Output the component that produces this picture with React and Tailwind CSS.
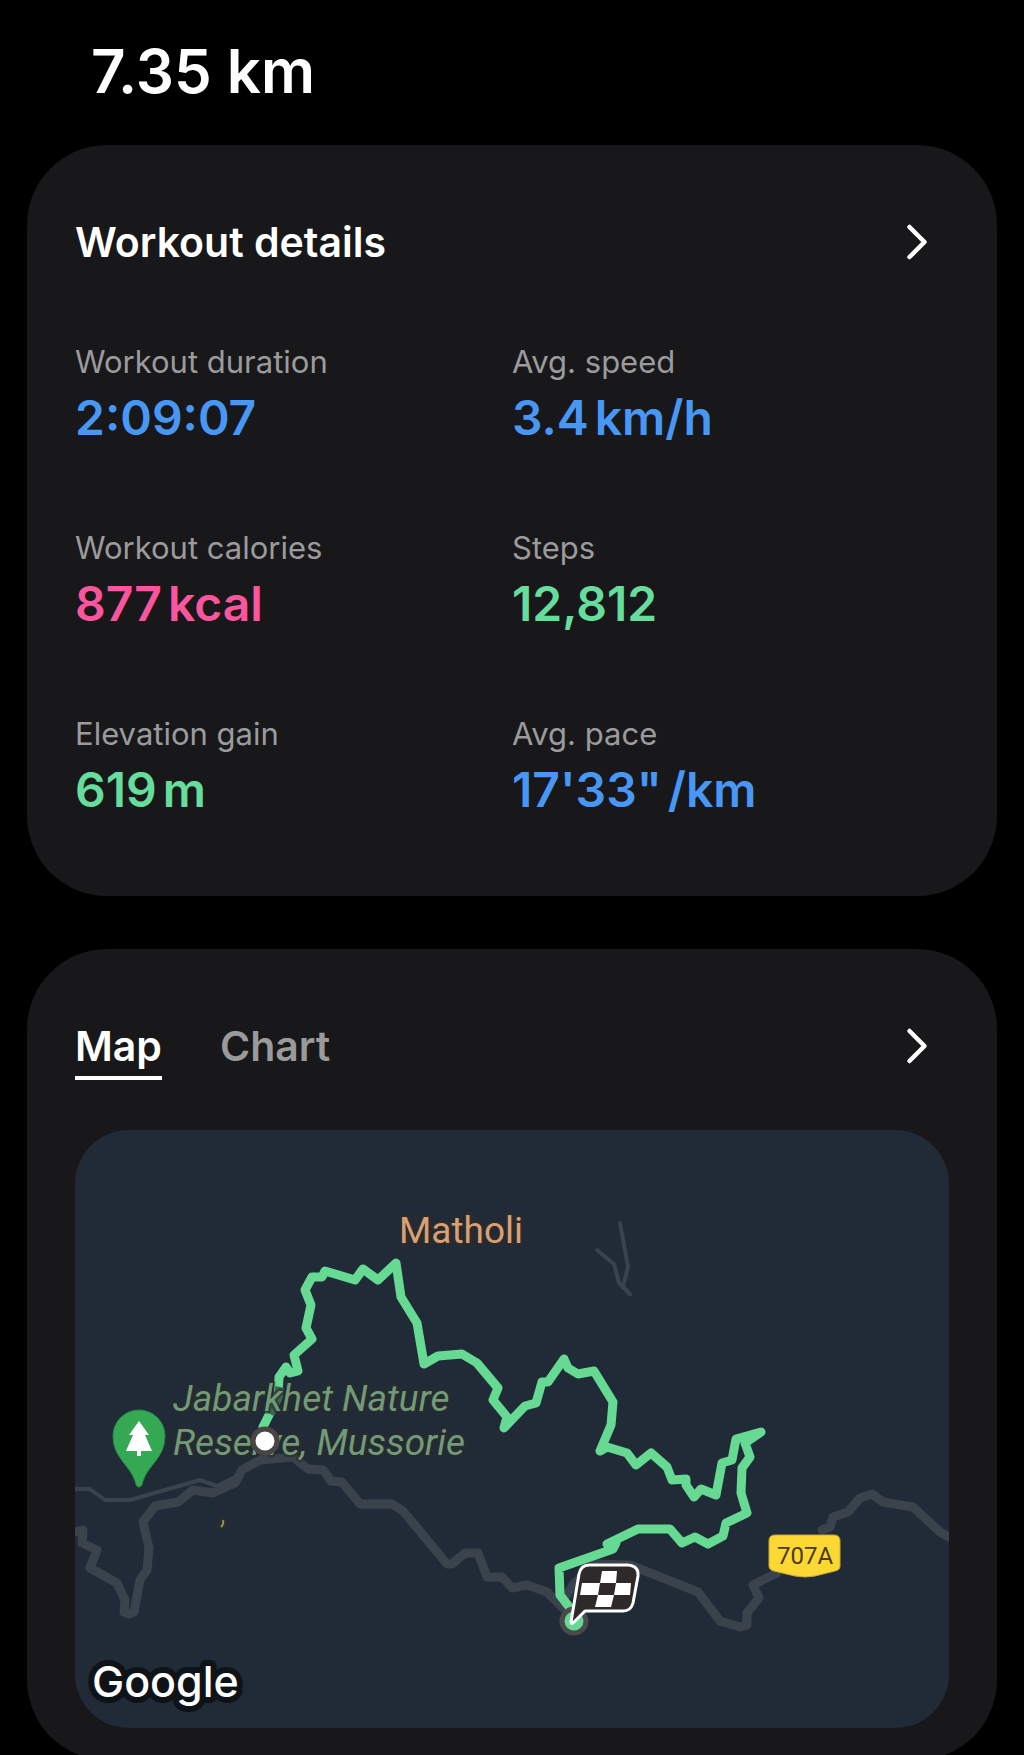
import { useState } from 'react'
import { ChevronRight } from 'lucide-react'

const stats = [
  { label: 'Workout duration', value: '2:09:07', color: 'text-[#4897f5]' },
  { label: 'Avg. speed', value: '3.4', unit: 'km/h', color: 'text-[#4897f5]' },
  { label: 'Workout calories', value: '877', unit: 'kcal', color: 'text-[#fb559d]' },
  { label: 'Steps', value: '12,812', color: 'text-[#66dd9c]' },
  { label: 'Elevation gain', value: '619', unit: 'm', color: 'text-[#66dd9c]' },
  { label: 'Avg. pace', value: '17\'33"', unit: '/km', color: 'text-[#4897f5]' },
]

const tabs = ['Map', 'Chart']

const route =
  '190,311 188,297 203,267 204,247 211,237 215,243 223,241 219,225 237,209 231,198 236,175 230,160 237,147 247,147 250,141 280,150 288,139 303,150 321,133 326,167 342,193 349,234 363,226 387,224 402,233 423,258 418,270 432,287 429,298 450,276 461,273 467,252 473,252 489,229 493,238 503,244 519,241 538,272 536,295 525,321 532,317 552,323 561,335 576,323 592,337 597,350 611,349 611,355 619,367 626,359 641,365 647,333 657,330 661,309 686,302 670,313 675,327 667,338 666,363 672,383 651,393 648,406 633,414 620,407 607,413 595,399 563,399 532,414 541,413 538,419 484,438 485,465 498,482 500,492'

const roads = [
  '0,402 8,400 7,413 22,420 15,438 42,453 50,470 49,482 54,484 59,482 65,450 72,440 74,418 68,392 80,376 103,372 118,360 138,363 160,353 167,340 185,330 218,327 233,339 248,340 256,351 267,352 285,374 317,374 328,381 372,434 377,434 390,423 403,423 412,447 427,447 437,458 452,455 472,462 488,478',
  '490,468 498,455 520,434 555,435 623,462 645,491 665,497 672,495 672,483 684,468 678,455 702,443',
  '747,400 755,397 758,387 773,382 785,368 797,364 808,372 838,377 865,402 876,408',
]

const tracks = [
  '0,359 15,359 30,370 55,370 125,350 142,356 158,348',
  '545,93 553,137 548,157 555,164',
  '522,120 539,134 544,153 548,157',
]

function RouteMap() {
  return (
    <svg
      viewBox="0 0 874 598"
      role="img"
      aria-label="Workout route"
      className="block w-full h-auto rounded-[54px] bg-[#202b37] font-['Roboto',sans-serif]"
    >
      {/* Roads */}
      <g fill="none" stroke="#3a424c" strokeLinejoin="round" strokeLinecap="round">
        {roads.map(points => (
          <polyline key={points} points={points} strokeWidth="9" />
        ))}
        {tracks.map(points => (
          <polyline key={points} points={points} strokeWidth="4" />
        ))}
      </g>

      {/* Route */}
      <polyline
        points={route}
        fill="none"
        stroke="#66d992"
        strokeWidth="9"
        strokeLinejoin="round"
        strokeLinecap="round"
      />
      <path d="M205 257 L203 267 L195 284" fill="none" stroke="#3d6652" strokeWidth="9" />

      {/* Place names */}
      <g stroke="#2a2b2b" strokeWidth="5" strokeLinejoin="round" paintOrder="stroke">
        <text x="324" y="113" fontSize="37" fill="#d9a077">Matholi</text>
        <g fontSize="37" fontStyle="italic" fill="#729a78" strokeOpacity="0.6">
          <text x="98" y="281">Jabarkhet Nature</text>
          <text x="98" y="325">Reserve, Mussorie</text>
        </g>
      </g>
      <path d="M148 390 q1 4 -2 7" fill="none" stroke="#2a2b2b" strokeWidth="8" strokeLinecap="round" />
      <path d="M148 390 q1 4 -2 7" fill="none" stroke="#8a9460" strokeWidth="2" />

      {/* Park pin */}
      <path
        d="M64 357 C61 357 61 354 60 351 C55 335 38 328 38 306 A26 26 0 0 1 90 306 C90 328 73 335 68 351 C67 354 67 357 64 357 Z"
        fill="#34a853"
        stroke="#2b8a47"
      />
      <path d="M64 291 L74 305 H70 L77 321 H66 V326 H62 V321 H51 L58 305 H54 Z" fill="#fff" />

      {/* Road shield */}
      <path
        d="M700 405 H759 Q765 405 765 411 V436 Q765 440 760 441 Q748 444 740 446 Q730 448 720 446 Q711 444 699 441 Q694 440 694 436 V411 Q694 405 700 405 Z"
        fill="#fdd835"
        stroke="#c9a92f"
      />
      <text x="730" y="434" fontSize="24" textAnchor="middle" fill="#4a3a16">707A</text>

      {/* Start */}
      <circle cx="190" cy="311" r="12" fill="#fff" stroke="#4a4545" strokeWidth="5" />

      {/* Finish */}
      <circle cx="499" cy="491" r="12" fill="#66d992" stroke="#4a4a4c" strokeWidth="5" />
      <path
        d="M496 492 L504 444 Q506 435 514 435 H553 Q564 436 563 446 L558 473 Q556 481 548 481 H510 L499 492 Q496 495 496 492 Z"
        fill="#2e2a2a"
        stroke="#fff"
        strokeWidth="3"
        strokeLinejoin="round"
      />
      <path
        d="M527 441 H542 L541 453 H525 Z M507 453 H525 L523 465 H505 Z M541 453 H556 L555 465 H539 Z M523 465 H539 L536 477 H520 Z"
        fill="#fff"
      />

      {/* Attribution */}
      <text
        x="17"
        y="567"
        fontSize="43"
        fontWeight="500"
        fill="#fff"
        stroke="#0e1318"
        strokeWidth="12"
        strokeLinejoin="round"
        paintOrder="stroke"
        className="font-['Inter',sans-serif]"
      >
        Google
      </text>
    </svg>
  )
}

export default function App() {
  const [tab, setTab] = useState('Map')

  return (
    <main className="h-screen overflow-hidden bg-black text-white font-['Inter',sans-serif]">
      <h1 className="pt-[35px] pb-[38px] pl-[91px] text-[60px] leading-[72px] font-semibold">7.35 km</h1>

      <div className="flex flex-col gap-[53px] px-[27px]">
        <section className="rounded-[80px] bg-[#18181a] px-12 pt-[67px] pb-[76px]">
          <div className="flex items-center justify-between">
            <h2 className="text-[41px] leading-[48px] font-semibold">Workout details</h2>
            <button aria-label="Open workout details" className="mr-0.5">
              <ChevronRight size={60} strokeWidth={1.8} />
            </button>
          </div>

          <dl className="grid grid-cols-2 gap-y-20 mt-[70px]">
            {stats.map(stat => (
              <div key={stat.label}>
                <dt className="text-[31px] leading-10 text-[#9b9b9d]">{stat.label}</dt>
                <dd className={`flex gap-1.5 mt-1.5 text-[48px] leading-[60px] font-semibold ${stat.color}`}>
                  <span>{stat.value}</span>
                  {stat.unit && <span>{stat.unit}</span>}
                </dd>
              </div>
            ))}
          </dl>
        </section>

        <section className="rounded-[80px] bg-[#18181a] px-12 pt-[63px] pb-8">
          <div className="flex items-center justify-between mb-[50px]">
            <div role="tablist" className="flex gap-[58px]">
              {tabs.map(name => (
                <button
                  key={name}
                  role="tab"
                  aria-selected={tab === name}
                  onClick={() => setTab(name)}
                  className={`py-1.5 border-y-4 border-transparent text-[41px] leading-[48px] font-semibold ${
                    tab === name ? 'border-b-white text-white' : 'text-[#9a9a9b]'
                  }`}
                >
                  {name}
                </button>
              ))}
            </div>
            <button aria-label="Open map" className="mr-0.5">
              <ChevronRight size={60} strokeWidth={1.8} />
            </button>
          </div>

          <RouteMap />
        </section>
      </div>
    </main>
  )
}
